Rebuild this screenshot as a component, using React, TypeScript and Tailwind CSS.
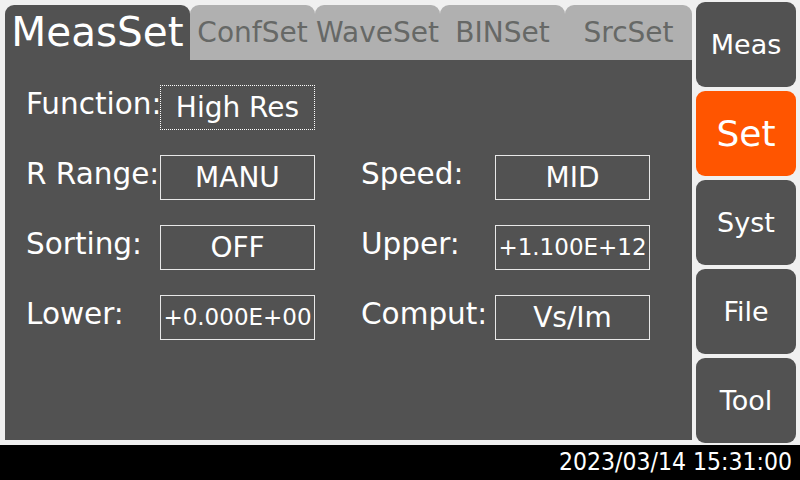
import React from "react";

const font = { fontFamily: '"DejaVu Sans", "Liberation Sans", sans-serif' };

function Label({ text }: { text: string }) {
  return (
    <div className="flex h-[45px] items-center pb-[5px] text-[29.5px] leading-none text-white whitespace-nowrap">
      {text}
    </div>
  );
}

function Box({ text, small, dotted }: { text: string; small?: boolean; dotted?: boolean }) {
  return (
    <div
      className={
        "flex h-[45px] w-[155px] items-center justify-center whitespace-nowrap leading-none text-white border " +
        (dotted ? "border-dotted border-white " : "border-solid border-[#e8e8e8] ") +
        (small ? "text-[23px]" : "text-[28px]")
      }
    >
      {text}
    </div>
  );
}

export default function App() {
  const tabs = [
    { name: "ConfSet", w: "w-[125px]" },
    { name: "WaveSet", w: "w-[125px]" },
    { name: "BINSet", w: "w-[125px]" },
    { name: "SrcSet", w: "w-[127px]" },
  ];
  const side = ["Meas", "Set", "Syst", "File", "Tool"];
  return (
    <div className="flex h-[480px] w-[800px] flex-col bg-[#f0f0f0]" style={font}>
      <div className="flex h-[445px] gap-[4px]">
        <div className="flex w-[692px] flex-col pl-[5px] pt-[5px]">
          <div className="flex h-[55px]">
            <div className="flex h-full w-[185px] items-center justify-center rounded-t-[9px] bg-[#525252] text-[40.5px] leading-none text-white">
              MeasSet
            </div>
            {tabs.map((t) => (
              <div
                key={t.name}
                className={
                  "flex h-full items-center justify-center rounded-t-[9px] bg-[#b0b0b0] text-[28px] leading-none text-[#666866] " +
                  t.w
                }
              >
                {t.name}
              </div>
            ))}
          </div>
          <div className="h-[380px] bg-[#525252] pl-[21px] pt-[25px]">
            <div className="grid grid-cols-[134px_155px_46px_134px_155px] gap-y-[25px]">
              <Label text="Function:" />
              <Box text="High Res" dotted />
              <div />
              <div />
              <div />

              <Label text="R Range:" />
              <Box text="MANU" />
              <div />
              <Label text="Speed:" />
              <Box text="MID" />

              <Label text="Sorting:" />
              <Box text="OFF" />
              <div />
              <Label text="Upper:" />
              <Box text="+1.100E+12" small />

              <Label text="Lower:" />
              <Box text="+0.000E+00" small />
              <div />
              <Label text="Comput:" />
              <Box text="Vs/Im" />
            </div>
          </div>
        </div>
        <div className="flex w-[100px] flex-col gap-[4px] pt-[2px]">
          {side.map((s) => (
            <div
              key={s}
              className={
                "flex h-[85px] items-center justify-center rounded-[9px] leading-none text-white " +
                (s === "Set" ? "bg-[#ff5500] text-[36px]" : "bg-[#525252] text-[27px]")
              }
            >
              {s}
            </div>
          ))}
        </div>
      </div>
      <div className="flex h-[35px] items-center justify-end bg-black pr-[8px]">
        <span
          className="text-[24.5px] leading-none text-white"
          style={{ fontFamily: '"DejaVu Sans Condensed", "DejaVu Sans", sans-serif', fontStretch: "condensed" }}
        >
          2023/03/14 15:31:00
        </span>
      </div>
    </div>
  );
}
